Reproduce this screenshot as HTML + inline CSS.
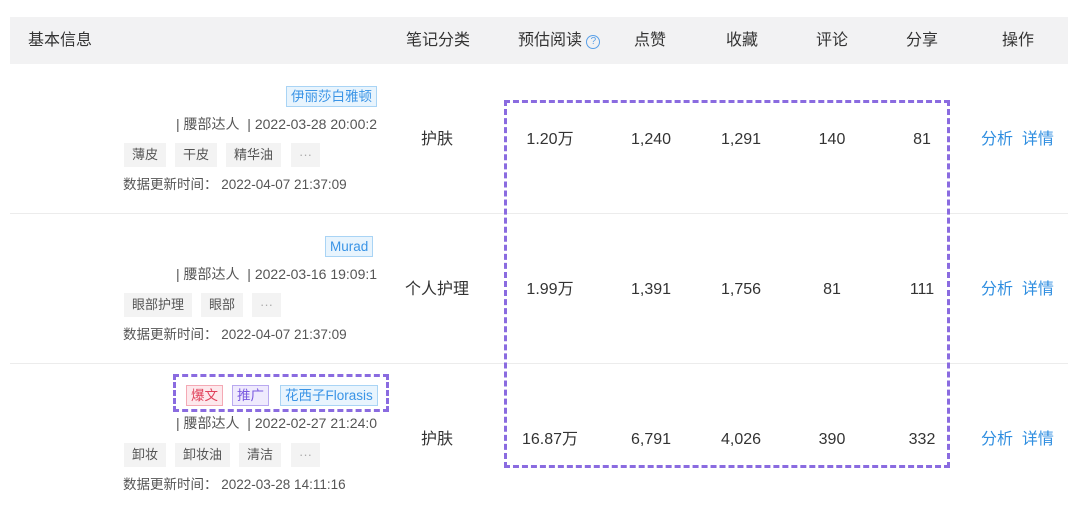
<!DOCTYPE html>
<html><head><meta charset="utf-8"><style>
body{margin:0;width:1080px;height:510px;background:#fff;position:relative;overflow:hidden;font-family:"Liberation Sans","Noto Sans CJK SC",sans-serif;color:#333}
.a{position:absolute;white-space:nowrap;line-height:20px;height:20px}
.hd{position:absolute;left:10px;top:17px;width:1058px;height:47px;background:#f2f2f3}
.h{font-size:16px;color:#333;top:31px}
.c{font-size:16px;color:#333;transform:translateX(-50%)}
.line{position:absolute;left:10px;width:1058px;height:1px;background:#ececec}
.tag{position:absolute;font-size:13.5px;padding:0 4px;height:19px;line-height:19px;border:1px solid #a9d4f5;background:#e8f4fd;color:#3a94e6;white-space:nowrap}
.g{position:absolute;font-size:13px;color:#555;background:#f3f3f3;height:24px;line-height:24px;padding:0 8px;white-space:nowrap}
.s{font-size:13.5px;color:#555}
.d{position:absolute;left:176px;width:204px;overflow:hidden;white-space:nowrap;font-size:14px;color:#555;line-height:20px;height:20px}
.lk{font-size:16px;color:#2f8ee0}
.box{position:absolute;border:3px dashed #8a6be0;box-sizing:border-box}
</style></head><body>
<div class="hd"></div>
<div class="a h" style="left:28px">基本信息</div>
<div class="a h" style="left:406px">笔记分类</div>
<div class="a h" style="left:518px">预估阅读 <span style="display:inline-block;width:12px;height:12px;border:1px solid #5aa0e8;border-radius:50%;font-size:10px;line-height:12px;text-align:center;color:#5aa0e8;vertical-align:1px">?</span></div>
<div class="a h" style="left:634px">点赞</div>
<div class="a h" style="left:726px">收藏</div>
<div class="a h" style="left:816px">评论</div>
<div class="a h" style="left:906px">分享</div>
<div class="a h" style="left:1002px">操作</div>
<div class="line" style="top:213px"></div>
<div class="line" style="top:363px"></div>

<!-- row1 -->
<div class="tag" style="left:286px;top:86px">伊丽莎白雅顿</div>
<div class="d" style="top:114px">| 腰部达人 &nbsp;| 2022-03-28 20:00:2</div>
<div class="g" style="left:124px;top:143px">薄皮</div>
<div class="g" style="left:175px;top:143px">干皮</div>
<div class="g" style="left:226px;top:143px">精华油</div>
<div class="g" style="left:291px;top:143px;color:#aaa">···</div>
<div class="a s" style="left:123px;top:175px">数据更新时间：&nbsp;2022-04-07 21:37:09</div>
<div class="a c" style="left:437px;top:130px">护肤</div>
<div class="a c" style="left:550px;top:130px">1.20万</div>
<div class="a c" style="left:651px;top:130px">1,240</div>
<div class="a c" style="left:741px;top:130px">1,291</div>
<div class="a c" style="left:832px;top:130px">140</div>
<div class="a c" style="left:922px;top:130px">81</div>
<div class="a lk" style="left:981px;top:130px">分析&nbsp;&nbsp;详情</div>

<!-- row2 -->
<div class="tag" style="left:325px;top:236px">Murad</div>
<div class="d" style="top:264px">| 腰部达人 &nbsp;| 2022-03-16 19:09:1</div>
<div class="g" style="left:124px;top:293px">眼部护理</div>
<div class="g" style="left:201px;top:293px">眼部</div>
<div class="g" style="left:252px;top:293px;color:#aaa">···</div>
<div class="a s" style="left:123px;top:325px">数据更新时间：&nbsp;2022-04-07 21:37:09</div>
<div class="a c" style="left:437px;top:280px">个人护理</div>
<div class="a c" style="left:550px;top:280px">1.99万</div>
<div class="a c" style="left:651px;top:280px">1,391</div>
<div class="a c" style="left:741px;top:280px">1,756</div>
<div class="a c" style="left:832px;top:280px">81</div>
<div class="a c" style="left:922px;top:280px">111</div>
<div class="a lk" style="left:981px;top:280px">分析&nbsp;&nbsp;详情</div>

<!-- row3 -->
<div class="tag" style="left:186px;top:385px;border-color:#f4a9b4;background:#fde8ec;color:#e0405a">爆文</div>
<div class="tag" style="left:232px;top:385px;border-color:#b9a9f0;background:#efeafd;color:#7a5ae0">推广</div>
<div class="tag" style="left:280px;top:385px">花西子Florasis</div>
<div class="d" style="top:413px">| 腰部达人 &nbsp;| 2022-02-27 21:24:0</div>
<div class="g" style="left:124px;top:443px">卸妆</div>
<div class="g" style="left:175px;top:443px">卸妆油</div>
<div class="g" style="left:239px;top:443px">清洁</div>
<div class="g" style="left:291px;top:443px;color:#aaa">···</div>
<div class="a s" style="left:123px;top:475px">数据更新时间：&nbsp;2022-03-28 14:11:16</div>
<div class="a c" style="left:437px;top:430px">护肤</div>
<div class="a c" style="left:550px;top:430px">16.87万</div>
<div class="a c" style="left:651px;top:430px">6,791</div>
<div class="a c" style="left:741px;top:430px">4,026</div>
<div class="a c" style="left:832px;top:430px">390</div>
<div class="a c" style="left:922px;top:430px">332</div>
<div class="a lk" style="left:981px;top:430px">分析&nbsp;&nbsp;详情</div>

<div class="box" style="left:504px;top:100px;width:446px;height:368px"></div>
<div class="box" style="left:173px;top:374px;width:216px;height:38px"></div>
</body></html>
